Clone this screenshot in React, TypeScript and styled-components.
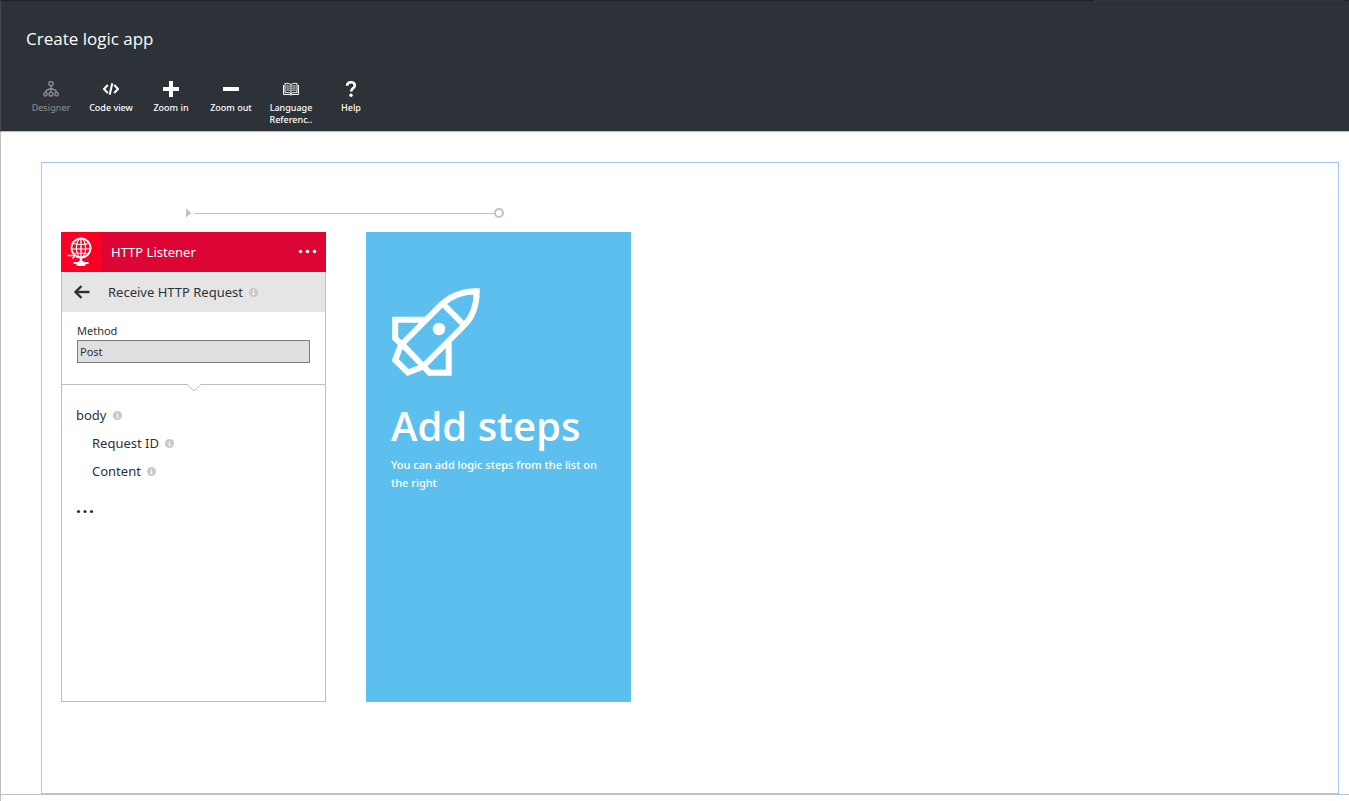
import React from "react";
import styled, { createGlobalStyle } from "styled-components";

const GlobalStyle = createGlobalStyle`
  *, *::before, *::after { box-sizing: border-box; }
  body {
    margin: 0;
    background: #fff;
    color: #2d3138;
    font-family: "Noto Sans", "Open Sans", sans-serif;
  }
  button, select { font: inherit; color: inherit; }
  h1, h2, h3, p, ul { margin: 0; padding: 0; font-weight: 400; }
`;

const Page = styled.div`
  display: flex;
  flex-direction: column;
  min-height: 100vh;
`;

const TopStrip = styled.div`
  display: flex;
  justify-content: flex-end;
  height: 1px;
  padding-right: 5px;
  background: #1f2226;
`;

const StripHighlight = styled.div`
  width: 250px;
  background: #32373f;
`;

const Header = styled.header`
  height: 131px;
  padding: 24px 20px 0;
  background: #2d3138;
  border-left: 1px solid #464a50;
  border-bottom: 1px solid #bcbdbf;
`;

const Title = styled.h1`
  padding-left: 5px;
  font-family: "Open Sans", sans-serif;
  font-size: 17px;
  line-height: 28px;
  color: #fff;
`;

const Toolbar = styled.div`
  display: flex;
  padding-top: 28px;
`;

const ToolButton = styled.button`
  display: flex;
  flex-direction: column;
  align-items: center;
  gap: 5px;
  width: 60px;
  padding: 0;
  border: 0;
  background: none;
  color: #fff;
  font-size: 9px;
  font-weight: 500;
  line-height: 12px;
  &:disabled { color: #85888c; }
  svg { display: block; }
`;

const Workspace = styled.main`
  display: flex;
  flex: 1;
  padding: 30px 10px 0 40px;
  border-left: 1px solid #c0c0c0;
  border-bottom: 1px solid #c0c0c0;
`;

const BottomStrip = styled.div`
  height: 6px;
  border-left: 1px solid #c0c0c0;
`;

const Surface = styled.section`
  flex: 1;
  padding: 44px 19px 91px;
  border: 1px solid #a3c5fa;
`;

const Connector = styled.svg`
  display: block;
  margin: 0 0 13px 124px;
`;

const Cards = styled.div`
  display: flex;
  gap: 40px;
`;

const Card = styled.article`
  display: flex;
  flex-direction: column;
  width: 265px;
  height: 470px;
`;

const CardHeader = styled.header`
  display: flex;
  align-items: center;
  height: 40px;
  padding-right: 8px;
  background: #dd0534;
  color: #fff;
`;

const Tile = styled.div`
  width: 40px;
  height: 40px;
  background: #fb0024;
  svg { display: block; }
`;

const CardTitle = styled.h2`
  flex: 1;
  padding-left: 10px;
  font-size: 13px;
  line-height: 20px;
`;

const IconButton = styled.button`
  display: flex;
  padding: 0;
  border: 0;
  background: none;
`;

const CardBody = styled.div`
  flex: 1;
  border: 1px solid #bcbec0;
  border-top: 0;
`;

const Operation = styled.div`
  display: flex;
  align-items: center;
  height: 40px;
  padding-left: 11px;
  background: #e5e5e5;
`;

const OperationName = styled.h3`
  padding: 0 6px 0 18px;
  font-size: 13px;
  line-height: 20px;
`;

const Inputs = styled.div`
  position: relative;
  height: 73px;
  padding: 10px 15px 0;
  border-bottom: 1px solid #bcbec0;
`;

const Notch = styled.svg`
  position: absolute;
  left: 125px;
  top: 72px;
`;

const Label = styled.label`
  display: block;
  font-size: 11px;
  line-height: 18px;
`;

const Select = styled.select`
  display: block;
  width: 100%;
  height: 23px;
  padding: 0 2px;
  appearance: none;
  border: 1px solid #7b7b7b;
  border-radius: 0;
  background: #dfdfdf;
  font-size: 11px;
`;

const Outputs = styled.ul`
  padding: 16px 14px 0;
  list-style: none;
`;

const Output = styled.li<{ $nested?: boolean }>`
  display: flex;
  align-items: center;
  gap: 6px;
  height: 28px;
  padding-left: ${(p) => (p.$nested ? 16 : 0)}px;
  font-size: 13px;
`;

const More = styled.div`
  padding: 24px 14px 0;
`;

const Promo = styled(Card)`
  padding: 55px 25px 0;
  background: #5cbfed;
  color: #fff;
  svg { display: block; }
`;

const PromoTitle = styled.h2`
  padding-top: 19px;
  font-family: "Open Sans", sans-serif;
  font-size: 40px;
  font-weight: 600;
  line-height: 60px;
  white-space: nowrap;
`;

const PromoText = styled.p`
  font-size: 11px;
  font-weight: 500;
  line-height: 18px;
`;

const Info = () => (
  <svg width="9" height="9" viewBox="0 0 9 9" role="img" aria-label="Info">
    <circle cx="4.5" cy="4.5" r="4.5" fill="#c8c8c8" />
    <path d="M4 2h1.2v1H4zM3.5 3.8h1.7v2.5h.5V7H3.3v-.7H4V4.5h-.5z" fill="#fff" />
  </svg>
);

const Dots = ({ r, gap }: { r: number; gap: number }) => (
  <svg width="20" height="6" viewBox="0 0 20 6" fill="currentColor" aria-hidden="true">
    {[0, 1, 2].map((i) => (
      <circle key={i} cx={2.5 + i * gap} cy="2.5" r={r} />
    ))}
  </svg>
);

const icons = {
  designer: (
    <g fill="none" stroke="currentColor" strokeWidth="1.5">
      <rect x="6" y="0.8" width="4" height="3.8" rx="1" />
      <path d="M8 4.7v6M3 11.500V9.800l5-2.600 5 2.600v1.700" />
      <circle cx="2.500" cy="13.200" r="1.700" />
      <circle cx="8" cy="13.200" r="1.900" />
      <circle cx="13.500" cy="13.200" r="1.700" />
    </g>
  ),
  code: (
    <path d="M4.800 4 1 8l3.800 4M11.200 4 15 8l-3.800 4M9.300 2.200 6.700 13.800" fill="none" stroke="currentColor" strokeWidth="2" />
  ),
  plus: <path d="M6 0h4v6h6v4h-6v6H6v-6H0V6h6z" fill="currentColor" />,
  minus: <path d="M0 6h16v4H0z" fill="currentColor" />,
  book: (
    <g fill="none" stroke="currentColor">
      <path d="M8 3.600C6.400 2.200 4 2 2 2.600v9.200c2-.5 4.400-.3 6 1 1.600-1.300 4-1.500 6-1V2.600c-2-.6-4.400-.4-6 1zM8 3.600v9" />
      <path d="M.5 4v9.500h6.200L8 14.200l1.300-.7h6.200V4" />
      <path d="M3.300 4.900q2-.4 3.500.4M3.300 7q2-.4 3.500.4M3.300 9.100q2-.4 3.500.4M12.700 4.900q-2-.4-3.500.4M12.700 7q-2-.4-3.500.4M12.700 9.100q-2-.4-3.500.4" strokeWidth="0.9" />
    </g>
  ),
  help: (
    <>
      <path d="M4.100 4.800C4.200 2.500 5.800 1.300 8 1.300s3.800 1.200 3.800 3.200c0 2.800-3.700 2.900-3.700 6" fill="none" stroke="currentColor" strokeWidth="2.600" />
      <circle cx="8" cy="14.200" r="1.700" fill="currentColor" />
    </>
  ),
};

const tools: { icon: keyof typeof icons; label: React.ReactNode; disabled?: boolean }[] = [
  { icon: "designer", label: "Designer", disabled: true },
  { icon: "code", label: "Code view" },
  { icon: "plus", label: "Zoom in" },
  { icon: "minus", label: "Zoom out" },
  { icon: "book", label: <>Language<br />Referenc..</> },
  { icon: "help", label: "Help" },
];

const Globe = () => (
  <svg width="40" height="40" viewBox="0 0 40 40" fill="none" stroke="#fff" aria-hidden="true">
    <circle cx="20" cy="16" r="9.600" strokeWidth="1.900" />
    <ellipse cx="20" cy="16" rx="4.600" ry="9.500" strokeWidth="1.200" />
    <path d="M20 6.500v19M12 11.500q8 2 16 0M10.500 17h19M12 22q8-2 16 0" strokeWidth="1.200" />
    <path d="M6 23.500h9" stroke="#fb0024" strokeWidth="4" />
    <path d="M6.500 23.500h7.500M11.500 20.500l3 3-3 3" strokeWidth="1.400" />
    <path d="M20 26v4" strokeWidth="2.400" />
    <path d="M12.500 31h15M15.500 32.800h9" strokeWidth="2" />
    <path d="M17.500 29h5v5h-5z" fill="#fff" stroke="none" />
  </svg>
);

const Rocket = () => (
  <svg width="90" height="90" viewBox="0 0 90 90" fill="none" stroke="#fff" strokeWidth="6" aria-hidden="true">
    <path d="M11 57 51 17C61 8 71 4.200 85.700 4.200 85.700 17 83 28 74 37.500L32.300 79.300z" />
    <path d="M51.500 16.500 74 39" />
    <path d="M36 32.700H4.200v18.800L11 57.500" />
    <path d="M57.700 54v31.700H38.500L32 79" />
    <path d="M10.500 56.500 4.200 73l12.800 12.500 15.500-6" />
    <circle cx="48" cy="42" r="6.200" fill="#fff" stroke="none" />
  </svg>
);

export default function App() {
  return (
    <Page>
      <GlobalStyle />
      <TopStrip>
        <StripHighlight />
      </TopStrip>
      <Header>
        <Title>Create logic app</Title>
        <Toolbar role="toolbar" aria-label="Logic app commands">
          {tools.map((tool) => (
            <ToolButton key={tool.icon} type="button" disabled={tool.disabled}>
              <svg width="16" height="16" viewBox="0 0 16 16" aria-hidden="true">
                {icons[tool.icon]}
              </svg>
              <span>{tool.label}</span>
            </ToolButton>
          ))}
        </Toolbar>
      </Header>
      <Workspace>
        <Surface>
          <Connector width="320" height="12" viewBox="0 0 320 12" aria-hidden="true">
            <path d="M1 1.500 6.500 6 1 10.500z" fill="#bdc3ca" />
            <path d="M9 6.500h301" stroke="#bdc3ca" />
            <circle cx="314" cy="6" r="4" fill="none" stroke="#bdc3ca" strokeWidth="2" />
          </Connector>
          <Cards>
            <Card>
              <CardHeader>
                <Tile>
                  <Globe />
                </Tile>
                <CardTitle>HTTP Listener</CardTitle>
                <IconButton type="button" aria-label="More options">
                  <Dots r={1.800} gap={7} />
                </IconButton>
              </CardHeader>
              <CardBody>
                <Operation>
                  <IconButton type="button" aria-label="Back">
                    <svg width="17" height="14" viewBox="0 0 17 14" fill="none" stroke="currentColor">
                      <path d="M2 7h14.500" strokeWidth="2.400" />
                      <path d="M8.500 1 2.500 7l6 6" strokeWidth="2.400" />
                    </svg>
                  </IconButton>
                  <OperationName>Receive HTTP Request</OperationName>
                  <Info />
                </Operation>
                <Inputs>
                  <Label htmlFor="method">Method</Label>
                  <Select id="method" defaultValue="Post">
                    <option>Post</option>
                  </Select>
                  <Notch width="14" height="8" viewBox="0 0 14 8" aria-hidden="true">
                    <path d="M0 0h14L7 7z" fill="#fff" />
                    <path d="M0 .5 7 7l7-6.500" fill="none" stroke="#bcbec0" />
                  </Notch>
                </Inputs>
                <Outputs>
                  <Output>body <Info /></Output>
                  <Output $nested>Request ID <Info /></Output>
                  <Output $nested>Content <Info /></Output>
                </Outputs>
                <More>
                  <IconButton type="button" aria-label="Show more outputs">
                    <Dots r={1.600} gap={6.500} />
                  </IconButton>
                </More>
              </CardBody>
            </Card>
            <Promo>
              <Rocket />
              <PromoTitle>Add steps</PromoTitle>
              <PromoText>You can add logic steps from the list on the right</PromoText>
            </Promo>
          </Cards>
        </Surface>
      </Workspace>
      <BottomStrip />
    </Page>
  );
}
